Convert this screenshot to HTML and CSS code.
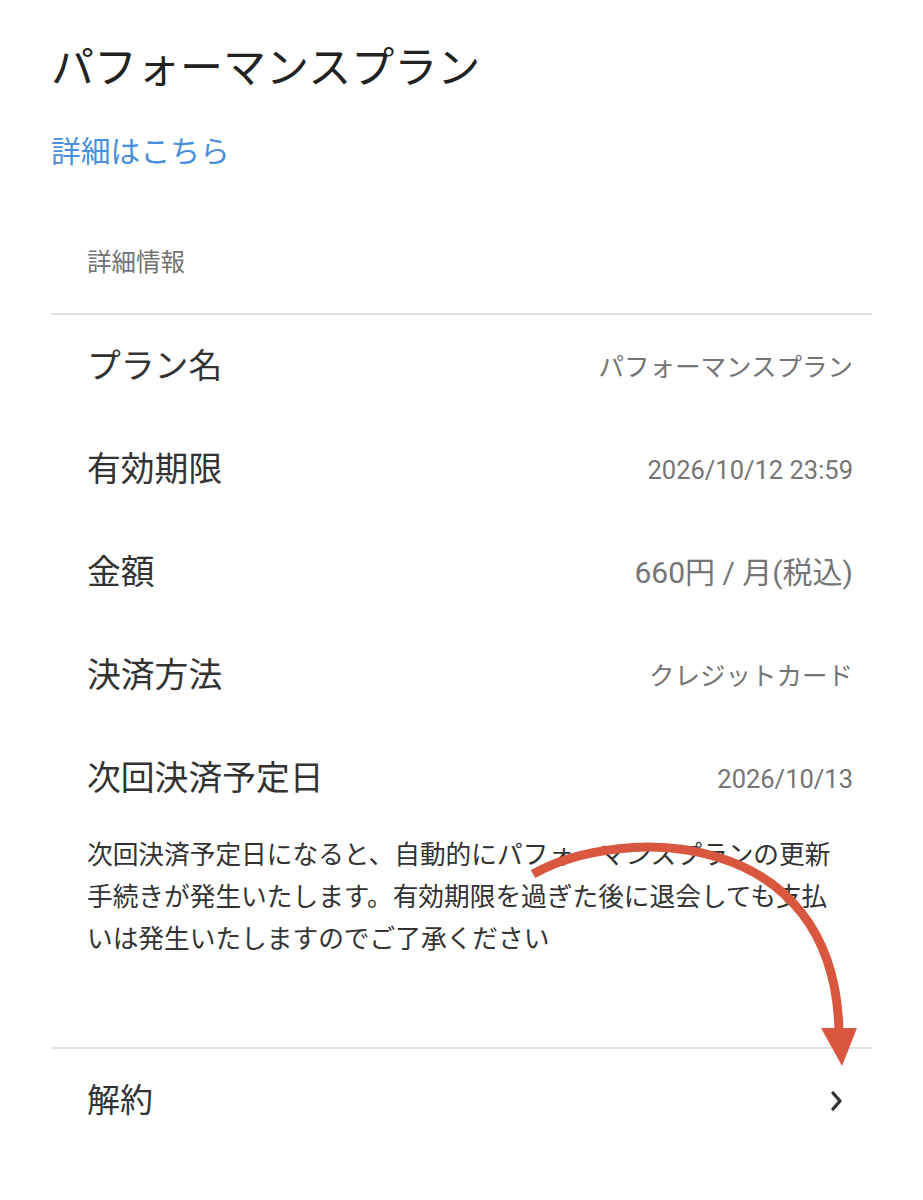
FILE: index.html
```html
<!DOCTYPE html>
<html lang="ja">
<head>
<meta charset="utf-8">
<link rel="stylesheet" href="styles.css">
</head>
<body>
<div class="page">
  <div class="head">
    <h1 class="title">パフォーマンスプラン</h1>
    <a class="link">詳細はこちら</a>
  </div>
  <div class="section">
    <div class="section-title">詳細情報</div>
    <div class="rows">
      <div class="row"><span class="label">プラン名</span><span class="value">パフォーマンスプラン</span></div>
      <div class="row"><span class="label">有効期限</span><span class="value">2026/10/12 23:59</span></div>
      <div class="row"><span class="label">金額</span><span class="value price">660円 / 月(税込)</span></div>
      <div class="row"><span class="label">決済方法</span><span class="value">クレジットカード</span></div>
      <div class="row"><span class="label">次回決済予定日</span><span class="value">2026/10/13</span></div>
    </div>
    <p class="note">次回決済予定日になると、自動的にパフォーマンスプランの更新手続きが発生いたします。有効期限を過ぎた後に退会しても支払いは発生いたしますのでご了承ください</p>
    <div class="cancel">
      <span class="label">解約</span>
      <svg class="chev" width="20" height="24" viewBox="0 0 20 24"><path d="M6 4 L13 12 L6 20" fill="none" stroke="#333" stroke-width="3.4" stroke-linecap="round" stroke-linejoin="round"/></svg>
    </div>
  </div>
  <svg class="arrow" width="923" height="1200" viewBox="0 0 923 1200">
    <path d="M533 874 C620 825 835 825 839 1032" fill="none" stroke="#d9573f" stroke-width="9" stroke-linecap="butt"/>
    <polygon points="821,1028 857,1028 842,1066" fill="#d9573f"/>
  </svg>
</div>
</body>
</html>
```

FILE: styles.css
```css
html, body {
  margin: 0;
  padding: 0;
  background: #fff;
}
body {
  font-family: Roboto, "Noto Sans CJK JP", sans-serif;
  width: 923px;
  height: 1200px;
  overflow: hidden;
}
.page {
  position: relative;
  height: 1200px;
}
.head {
  padding: 40px 0 0 51px;
  display: flex;
  flex-direction: column;
  align-items: flex-start;
}
.title {
  margin: 0;
  font-size: 43px;
  line-height: 56px;
  font-weight: 400;
  color: #222;
}
.link {
  margin-top: 36px;
  font-size: 29.8px;
  line-height: 40px;
  color: #4a8fdb;
}
.section {
  margin: 0 51px;
}
.section-title {
  margin-top: 75px;
  padding-left: 36px;
  font-size: 24.5px;
  line-height: 32px;
  color: #737373;
  padding-bottom: 34px;
  border-bottom: 2px solid #e2e2e2;
}
.row, .cancel {
  display: flex;
  align-items: center;
  justify-content: space-between;
  height: 103px;
  padding: 0 19px 0 36px;
}
.label {
  font-size: 33.8px;
  color: #333;
  line-height: 44px;
}
.value {
  font-size: 25.5px;
  color: #757575;
  line-height: 34px;
}
.value.price {
  font-size: 30px;
}
.note {
  margin: 4px 0 0;
  padding: 0 32px 0 36px;
  font-size: 25.7px;
  line-height: 42px;
  color: #333;
}
.cancel {
  margin-top: 87px;
  border-top: 2px solid #e2e2e2;
  height: 104px;
}
.cancel .label {
  font-size: 33px;
}
.chev {
  margin-right: 6px;
}
.arrow {
  position: absolute;
  left: 0;
  top: 0;
  pointer-events: none;
}
```
